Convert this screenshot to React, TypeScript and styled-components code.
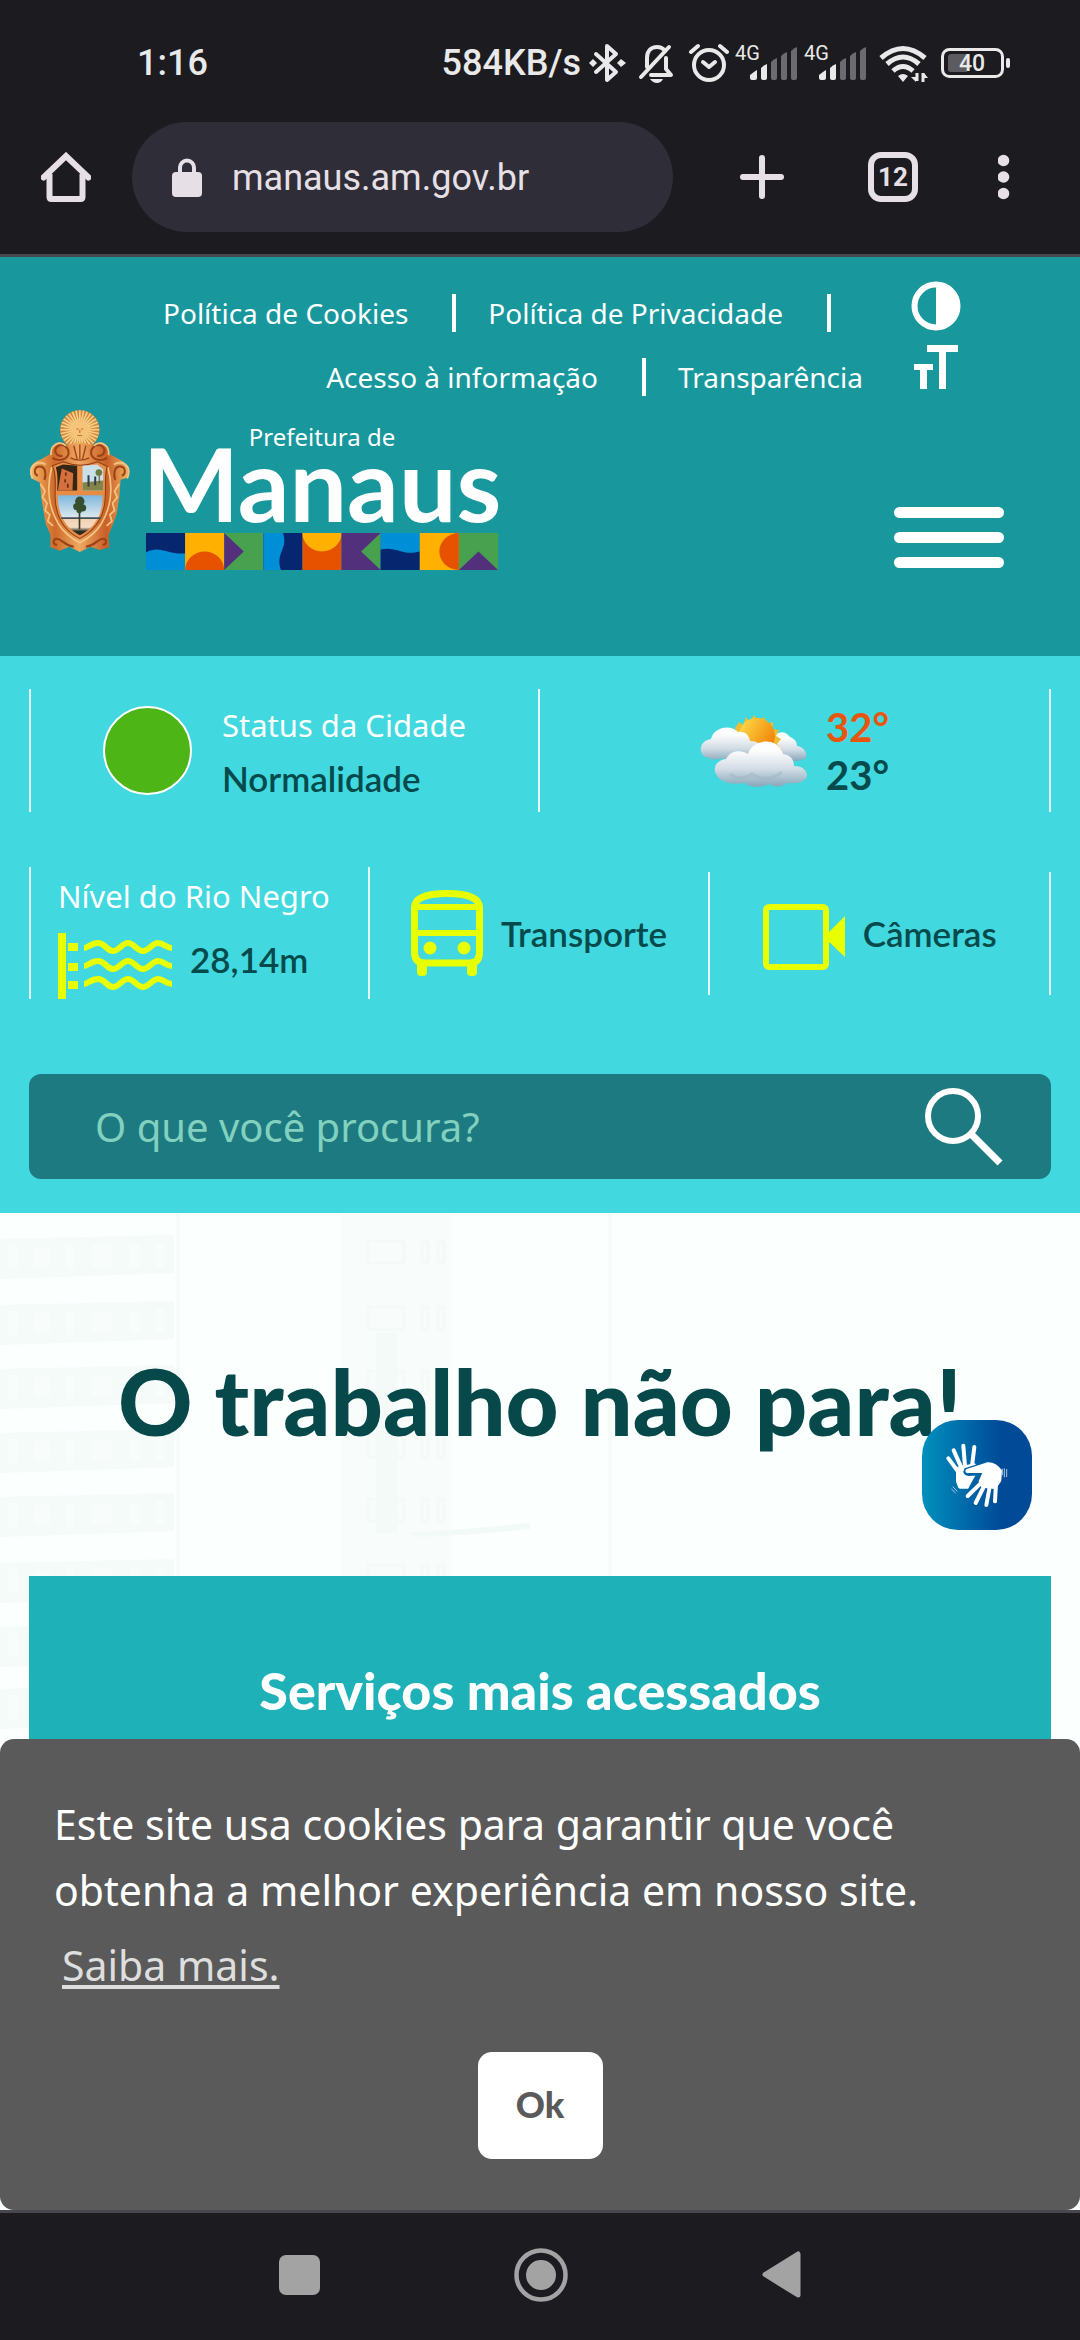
import React from 'react';
import styled, { createGlobalStyle } from 'styled-components';

const GlobalStyle = createGlobalStyle`
  *, *::before, *::after { box-sizing: border-box; }
  html, body { margin: 0; padding: 0; }
  body { background: #1c1b20; font-family: "Noto Sans", "Open Sans", sans-serif; }
  button { border: 0; padding: 0; background: none; color: inherit; font: inherit; cursor: pointer; }
  ul { list-style: none; margin: 0; padding: 0; }
  h1, h2, p { margin: 0; }
  svg { display: block; flex: none; }
`;

const Screen = styled.div`
  display: flex;
  flex-direction: column;
  min-height: 100vh;
`;

/* ---------- device and browser bars ---------- */

const StatusBar = styled.div`
  display: flex;
  align-items: center;
  justify-content: space-between;
  padding: 40px 70px 36px 137px;
  background: #1c1b20;
  color: #e9e9e9;
  font: 500 36px/46px Roboto, sans-serif;
`;

const StatusIcons = styled.div`
  display: flex;
  align-items: center;
  gap: 6px;
`;

const Toolbar = styled.div`
  display: flex;
  align-items: center;
  padding: 0 70px 22px 41px;
  border-bottom: 3px solid #47484d;
  background: #1c1b20;
  color: #e6e0e6;
`;

const AddressPill = styled.label`
  display: flex;
  flex: 1;
  align-items: center;
  gap: 30px;
  min-width: 0;
  height: 110px;
  margin: 0 65px 0 41px;
  padding: 2px 40px 0;
  border-radius: 55px;
  background: #2f2d38;
`;

const AddressInput = styled.input`
  flex: 1;
  min-width: 0;
  padding: 0;
  border: 0;
  outline: 0;
  background: transparent;
  color: #e6e0e6;
  font: 400 36px/48px Roboto, sans-serif;
`;

const ToolbarActions = styled.div`
  display: flex;
  align-items: center;
  gap: 80px;
`;

const BarButton = styled.button`
  display: flex;
  align-items: center;
  justify-content: center;
`;

const TabCount = styled(BarButton)`
  width: 50px;
  height: 50px;
  border: 6px solid #e6e0e6;
  border-radius: 13px;
  font: 700 26px/38px Roboto, sans-serif;
`;

/* ---------- site ---------- */

const Site = styled.div`
  position: relative;
  display: flex;
  flex: 1;
  flex-direction: column;
`;

const Header = styled.header`
  padding: 24px 29px 86px;
  background: #18979d;
  color: #fff;
`;

const TopNav = styled.nav`
  display: flex;
  justify-content: flex-end;
  padding-right: 90px;
`;

const LinkList = styled.ul`
  display: flex;
  flex: 1;
  flex-wrap: wrap;
  justify-content: flex-end;
`;

const LinkItem = styled.li`
  display: flex;
  align-items: center;
  height: 64px;

  &:not(:last-child)::after {
    content: "";
    width: 4px;
    height: 38px;
    margin: 0 32px 0 44px;
    background: #fff;
  }
`;

const TopLink = styled.a`
  color: #fff;
  font-size: 28px;
  line-height: 38px;
  text-decoration: none;
`;

const AccessTools = styled.div`
  display: flex;
  flex-direction: column;
  align-items: center;
  gap: 14px;
  margin-left: 48px;
`;

const Brand = styled.div`
  display: flex;
  align-items: flex-start;
  justify-content: space-between;
`;

const BrandLink = styled.a`
  display: flex;
  gap: 16px;
  color: #fff;
  text-decoration: none;
`;

const Wordmark = styled.span`
  display: flex;
  flex-direction: column;
  align-items: center;
  width: 352px;
  padding-top: 12px;
`;

const WordmarkTop = styled.span`
  font-size: 24px;
  line-height: 32px;
`;

const WordmarkName = styled.span`
  margin-bottom: 20px;
  font-family: Lato, sans-serif;
  font-size: 102px;
  font-weight: 700;
  line-height: 60px;
`;

const MenuButton = styled.button`
  display: flex;
  flex-direction: column;
  gap: 14px;
  width: 110px;
  margin: 98px 47px 0 0;
`;

const MenuLine = styled.span`
  height: 11px;
  border-radius: 6px;
  background: #fff;
`;

const InfoBand = styled.section`
  padding: 33px 29px 34px;
  background: #41d8df;
`;

const InfoRow = styled.div<{ $columns: number }>`
  display: grid;
  grid-template-columns: repeat(${(p) => p.$columns}, 1fr);
  align-items: center;
  margin-bottom: ${(p) => (p.$columns === 2 ? '55px' : '75px')};
`;

const InfoCell = styled.div`
  display: flex;
  align-items: center;
  justify-content: center;
  gap: 18px;
  height: 123px;
  border-right: 2px solid #e6fafb;

  &:first-child { border-left: 2px solid #e6fafb; }
`;

const StatusCell = styled(InfoCell)`
  gap: 30px;
`;

const RiverCell = styled(InfoCell)`
  flex-direction: column;
  align-items: flex-start;
  justify-content: space-between;
  gap: 0;
  height: 132px;
  padding: 2px 0 0 27px;
`;

const RiverReading = styled.div`
  display: flex;
  align-items: flex-start;
  gap: 18px;
`;

const StatusDot = styled.span`
  width: 89px;
  height: 89px;
  border: 2px solid #fff;
  border-radius: 50%;
  background: #4db515;
`;

const Caption = styled.span`
  display: block;
  color: #fff;
  font-size: 31px;
  line-height: 54px;
  white-space: nowrap;
`;

const Strong = styled.span`
  display: block;
  color: #054a4c;
  font-family: Lato, sans-serif;
  font-size: 35px;
  font-weight: 600;
  line-height: 52px;
`;

const InfoLink = styled.a`
  display: flex;
  align-items: center;
  gap: 18px;
  text-decoration: none;
`;

const Temperature = styled.span<{ $hot?: boolean }>`
  display: block;
  color: ${(p) => (p.$hot ? '#e8560c' : '#054a4c')};
  font-family: Lato, sans-serif;
  font-size: 40px;
  font-weight: 700;
  line-height: 48px;
`;

const SearchForm = styled.form`
  display: flex;
  align-items: center;
  height: 105px;
  padding: 0 48px 0 66px;
  border-radius: 12px;
  background: #1d7a80;
`;

const SearchInput = styled.input`
  flex: 1;
  min-width: 0;
  padding: 0;
  border: 0;
  outline: 0;
  background: transparent;
  color: #fff;
  font: 400 40px/56px "Noto Sans", sans-serif;

  &::placeholder { color: #82d1bf; opacity: 1; }
`;

const Content = styled.main`
  position: relative;
  display: flex;
  flex: 1;
  flex-direction: column;
  padding: 136px 29px 0;
  overflow: hidden;
  background: #fbfffe;
`;

const Backdrop = styled.div`
  position: absolute;
  inset: 0;
  opacity: 0.7;
`;

const Headline = styled.h1`
  position: relative;
  margin-bottom: 123px;
  color: #07494b;
  font-family: Lato, sans-serif;
  font-size: 92px;
  font-weight: 900;
  line-height: 104px;
  text-align: center;
`;

const ServicesCard = styled.section`
  position: relative;
  flex: 1;
  padding-top: 84px;
  background: #1eb1b8;
`;

const ServicesTitle = styled.h2`
  color: #fff;
  font-family: Lato, sans-serif;
  font-size: 52px;
  font-weight: 900;
  line-height: 60px;
  text-align: center;
`;

const SignButton = styled.button`
  position: absolute;
  right: 48px;
  top: 207px;
  width: 110px;
  height: 110px;
  border-radius: 36px;
  background: linear-gradient(90deg, #0090bd 0%, #004a98 72%);
`;

const CookieBanner = styled.aside`
  position: absolute;
  right: 0;
  bottom: 0;
  left: 0;
  display: flex;
  flex-direction: column;
  padding: 52px 54px 51px;
  border-radius: 14px;
  background: #5a5a5a;
  color: #fff;
  font-size: 41px;
  line-height: 66px;
`;

const CookieLink = styled.a`
  align-self: flex-start;
  margin: 9px 0 54px 8px;
  color: #dedede;
  text-decoration: underline;
  text-decoration-thickness: 4px;
  text-decoration-skip-ink: none;
  text-underline-offset: 4px;
`;

const OkButton = styled.button`
  align-self: center;
  width: 125px;
  height: 107px;
  padding-bottom: 4px;
  border-radius: 14px;
  background: #fff;
  color: #5a5a5a;
  font-family: Lato, sans-serif;
  font-size: 36px;
  font-weight: 900;
`;

const NavBar = styled.nav`
  display: flex;
  align-items: center;
  justify-content: center;
  gap: 194px;
  height: 130px;
  padding-bottom: 4px;
  border-top: 3px solid #48464f;
  background: #1c1b20;
`;

/* ---------- drawings ---------- */

const SignalIcon = () => (
  <svg width="63" height="46" viewBox="0 -4 63 46" fill="#e9e9e9" aria-label="4G">
    <text x="0" y="16" fontFamily="Roboto, sans-serif" fontSize="20" fontWeight="400">4G</text>
    <path d="M15 34v-3q5-4 7-5v8q0 2-2 2h-3q-2 0-2-2z" />
    <path d="M26 34V24q3-3 6-4v14q0 2-2 2h-2q-2 0-2-2z" />
    <g fill="#6c6c70">
      <path d="M36 34V18q3-3 6-4v20q0 2-2 2h-2q-2 0-2-2z" />
      <path d="M46 34V12q3-3 6-4v26q0 2-2 2h-2q-2 0-2-2z" />
      <path d="M56 34V7q3-3 6-4v31q0 2-2 2h-2q-2 0-2-2z" />
    </g>
  </svg>
);

const BluetoothIcon = () => (
  <svg width="42" height="42" viewBox="0 0 42 42" fill="none" stroke="#e9e9e9" strokeWidth="4" aria-hidden="true">
    <path d="M9 12l20 18-9 8V4l9 8L9 30" strokeLinejoin="round" strokeLinecap="round" />
    <g fill="#e9e9e9" stroke="none"><path d="M2 21l4-4 4 4-4 4zM30 21l4-4 5 4-5 4z" /></g>
  </svg>
);

const MutedIcon = () => (
  <svg width="40" height="42" viewBox="0 0 40 42" fill="none" stroke="#e9e9e9" strokeWidth="4" strokeLinecap="round" aria-hidden="true">
    <path d="M12 25V16c0-7 4-11 10-11 3 0 6 1 8 4M31 16v11l5 6H16" strokeLinejoin="round" />
    <path d="M34 5L6 35" />
    <path d="M15 37h13q-2 4-6 4t-7-4z" fill="#e9e9e9" stroke="none" />
  </svg>
);

const AlarmIcon = () => (
  <svg width="48" height="42" viewBox="0 0 48 42" fill="none" stroke="#e9e9e9" strokeWidth="4" strokeLinecap="round" aria-hidden="true">
    <circle cx="28" cy="23" r="15" />
    <path d="M22 20l6 5 6-5" strokeLinejoin="round" />
    <path d="M10 10l7-6M46 10l-7-6" />
  </svg>
);

const WifiIcon = () => (
  <svg width="62" height="42" viewBox="0 0 62 42" fill="none" stroke="#e9e9e9" strokeWidth="5" aria-hidden="true">
    <path d="M8 16q22-19 44 0M14 22q16-14 32 0M20 29q10-9 20 0" />
    <path d="M25 34q5-4 10 0l-5 6z" fill="#e9e9e9" stroke="none" />
    <path d="M44 31v8M50 31v9" strokeWidth="3" />
    <path d="M38 35h5v5zM51 31l4 5h-4z" fill="#e9e9e9" stroke="none" />
  </svg>
);

const BatteryIcon = () => (
  <svg width="69" height="32" viewBox="0 0 69 32" aria-label="Bateria 40">
    <rect x="1.5" y="2.5" width="60" height="27" rx="7" fill="none" stroke="#e9e9e9" strokeWidth="3" />
    <path d="M10 7h16v18H10q-3 0-3-3V10q0-3 3-3z" fill="#5c5c60" />
    <rect x="65" y="11" width="4" height="10" rx="2" fill="#e9e9e9" />
    <text x="31" y="24" textAnchor="middle" fill="#e9e9e9" fontFamily="Roboto, sans-serif" fontSize="23" fontWeight="500">40</text>
  </svg>
);

const HomeIcon = () => (
  <svg width="50" height="50" viewBox="0 0 50 50" fill="none" stroke="#e6e0e6" strokeWidth="6" aria-hidden="true">
    <path d="M2.500 25.500L25 4l22.500 21.500" strokeLinecap="round" strokeLinejoin="miter" />
    <path d="M8.500 22v23q0 2 2 2h29q2 0 2-2V22" />
  </svg>
);

const LockIcon = () => (
  <svg width="30" height="40" viewBox="0 0 30 40" aria-hidden="true">
    <rect y="14" width="30" height="25" rx="4" fill="#e6e0e6" />
    <path d="M8 16V9.500a7 7 0 0 1 14 0V16" fill="none" stroke="#e6e0e6" strokeWidth="4" />
  </svg>
);

const PlusIcon = () => (
  <svg width="50" height="50" viewBox="0 0 50 50" stroke="#e6e0e6" strokeWidth="6" strokeLinecap="round" aria-hidden="true">
    <path d="M24 6v38M5 25h38" />
  </svg>
);

const DotsIcon = () => (
  <svg width="12" height="50" viewBox="0 0 12 50" fill="#e6e0e6" aria-hidden="true">
    <circle cx="5.500" cy="8.500" r="5.800" /><circle cx="5.500" cy="25" r="5.800" /><circle cx="5.500" cy="41.500" r="5.800" />
  </svg>
);

const ContrastIcon = () => (
  <svg width="50" height="50" viewBox="0 0 50 50" aria-hidden="true">
    <circle cx="25" cy="25" r="21.500" fill="none" stroke="#fff" strokeWidth="6" />
    <path d="M25 5a20 20 0 0 1 0 40z" fill="#fff" />
  </svg>
);

const TextSizeIcon = () => (
  <svg width="44" height="44" viewBox="0 0 44 44" fill="#fff" aria-hidden="true">
    <path d="M13 0h31v7H32v37h-7V7H13zM0 19h19v6h-6v19H6V25H0z" />
  </svg>
);

const RAYS = Array.from({ length: 32 }, (_, i) => (i * Math.PI * 2) / 32);

const CoatOfArms = () => (
  <svg width="101" height="143" viewBox="28 26 302 428" aria-label="Brasão de Manaus">
    <defs>
      <linearGradient id="gold" x1="0" x2="1" y1="0" y2="0">
        <stop offset="0" stopColor="#f3b765" /><stop offset="0.25" stopColor="#cf6a2a" />
        <stop offset="0.5" stopColor="#efa862" /><stop offset="0.78" stopColor="#c85f26" /><stop offset="1" stopColor="#f0b165" />
      </linearGradient>
      <linearGradient id="sky" x1="0" x2="0" y1="0" y2="1">
        <stop offset="0" stopColor="#7fb6dc" /><stop offset="0.55" stopColor="#dbe8ee" />
        <stop offset="0.57" stopColor="#f3cfae" /><stop offset="0.8" stopColor="#f5dcc6" /><stop offset="0.9" stopColor="#2c2b20" />
      </linearGradient>
    </defs>
    <circle cx="180" cy="88" r="59" fill="#d5853c" />
    <g stroke="#f6cf86" strokeWidth="5">
      {RAYS.map((a) => (
        <line key={a} x1={180 + Math.cos(a) * 24} y1={88 + Math.sin(a) * 24} x2={180 + Math.cos(a) * 58} y2={88 + Math.sin(a) * 58} />
      ))}
    </g>
    <circle cx="180" cy="90" r="27" fill="#f6c479" />
    <path d="M170 86h6M184 86h6M180 88v10M173 104q7 4 14 0" stroke="#b4662b" strokeWidth="3" fill="none" />
    <path d="M92 160C92 128 122 118 142 134L180 126L218 134C240 118 268 128 268 160L300 178C322 186 330 210 322 232L302 238L298 290L290 340L276 380L266 402L268 440L240 448L212 438L180 454L148 438L120 450L92 440L92 402L78 370L66 300L60 246L36 234C24 206 36 186 62 178Z" fill="url(#gold)" />
    <g fill="none" stroke="#9b4217" strokeWidth="6">
      <path d="M128 166c-20 4-30-20-12-30 20-8 36 12 28 30-8 14-30 16-46 6" />
      <path d="M232 166c20 4 30-20 12-30-20-8-36 12-28 30 8 14 30 16 46 6" />
      <path d="M54 226c-14-8-10-28 6-28 18 0 20 24 14 40" />
      <path d="M306 226c14-8 10-28-6-28-18 0-20 24-14 40" />
      <path d="M112 432c-14 2-14-18 0-18 16 2 20 20 50 24" />
      <path d="M248 432c14 2 14-18 0-18-16 2-20 20-50 24" />
      <path d="M162 136l10 40M180 132v44M198 136l-10 40M152 172q28 14 56 0" strokeWidth="4" />
    </g>
    <g fill="none" stroke="#f7c583" strokeWidth="5">
      <path d="M38 234c-16-40 16-56 40-42M322 234c16-40-16-56-40-42" />
      <path d="M94 164c-4-30 24-46 44-28M266 164c4-30-24-46-44-28" />
      <path d="M62 250l14 22-8 18 14 18-6 22 14 12-6 20 16 14M298 250l-14 22 8 18-14 18 6 22-14 12 6 20-16 14" />
      <path d="M96 200c-16 60-10 120 20 170 18 28 40 44 64 56 24-12 46-28 64-56 30-50 36-110 20-170" />
    </g>
    <path d="M98 196L130 184Q180 204 234 184L262 198C254 220 258 256 256 290C254 356 220 392 180 414C136 392 108 350 106 290C106 250 110 220 98 196Z" fill="#e88c45" stroke="#8b3d18" strokeWidth="3" />
    <path d="M108 200L130 192L172 196V270H112C114 240 114 220 108 200Z" fill="#332616" />
    <path d="M126 204L160 218L158 270H114Q120 236 126 204Z" fill="#d4703c" />
    <path d="M138 216v10M136 236v10M144 250v12" stroke="#6b2c14" strokeWidth="5" />
    <path d="M188 196L232 192L250 206V270H188Z" fill="#cbdfe8" />
    <path d="M188 246L250 240V270H188Z" fill="#83834a" />
    <path d="M206 224v34M226 228v26" stroke="#313e50" strokeWidth="6" />
    <path d="M238 214v36" stroke="#5a4a2c" strokeWidth="3" />
    <circle cx="237" cy="216" r="10" fill="#6c7a44" />
    <path d="M114 284H248C250 350 218 384 180 404C142 384 114 350 114 284Z" fill="url(#sky)" />
    <path d="M124 350h118v5H124z" fill="#42525a" />
    <path d="M179 320v66" stroke="#3b3a24" strokeWidth="5" />
    <g fill="#364e2c"><circle cx="180" cy="302" r="14" /><circle cx="171" cy="318" r="11" /><circle cx="188" cy="322" r="11" /><circle cx="178" cy="330" r="8" /></g>
  </svg>
);

const TileStrip = () => (
  <svg width="352" height="37" viewBox="0 0 360 38" preserveAspectRatio="none" aria-hidden="true">
    <path d="M0 0h40v38H0z" fill="#072670" /><path d="M0 20C14 12 20 22 40 21V38H0z" fill="#008fd6" />
    <path d="M40 0h40v38H40z" fill="#ffb000" /><path d="M40 38a20 19 0 0 1 40 0z" fill="#e65200" />
    <path d="M80 0h40v38H80z" fill="#48a14f" /><path d="M80 0l20 19-20 19z" fill="#52307c" />
    <path d="M120 0h40v38h-40z" fill="#072670" /><path d="M120 0h20c6 16-8 20-2 38h-18z" fill="#008fd6" />
    <path d="M160 0h40v38h-40z" fill="#e65200" /><path d="M160 0a20 19 0 0 0 40 0z" fill="#ffb000" />
    <path d="M200 0h40v38h-40z" fill="#52307c" /><path d="M240 0l-20 19 20 19z" fill="#48a14f" />
    <path d="M240 0h40v38h-40z" fill="#008fd6" /><path d="M240 17c16-4 22 7 40 2v19h-40z" fill="#072670" />
    <path d="M280 0h40v38h-40z" fill="#ffb000" /><path d="M320 0a20 19 0 0 0 0 38z" fill="#e65200" />
    <path d="M320 0h40v38h-40z" fill="#48a14f" /><path d="M320 38l20-19 20 19z" fill="#52307c" />
  </svg>
);

const WeatherIcon = () => (
  <svg width="108" height="74" viewBox="0 0 108 74" aria-label="Parcialmente nublado">
    <defs>
      <linearGradient id="cloud" x1="0" x2="0" y1="0" y2="1">
        <stop offset="0.2" stopColor="#fdfdfd" /><stop offset="0.6" stopColor="#d3dde6" /><stop offset="1" stopColor="#86a6ba" />
      </linearGradient>
      <linearGradient id="sun" x1="0" x2="1" y1="0" y2="0.6">
        <stop offset="0" stopColor="#ffe14d" /><stop offset="1" stopColor="#f08508" />
      </linearGradient>
    </defs>
    <path d="M70 32c2-14 14-18 20-9 5 2 7 5 7 9 7 1 10 6 9 12-6 4-14 3-22 3z" fill="url(#cloud)" />
    <path d="M35 14l4-6 4 3 3-8 4 5 4-7 4 6 6-4 2 7 7-2 0 7 6 1-3 6 5 3-4 5 5 6-3 3-38-8z" fill="#eebd36" />
    <circle cx="57" cy="22" r="18" fill="url(#sun)" />
    <path d="M2 40C-2 32 4 26 11 25 14 13 30 10 38 18c8-1 11 4 12 9 8 0 12 4 11 11-4 8-16 6-22 6-6 6-14 4-17 0-8 3-16 1-20-4z" fill="url(#cloud)" />
    <path d="M16 60c-4-8 2-14 10-15 4-8 14-10 22-5 4-15 30-18 35 0 8 1 11 6 11 12 8 0 13 4 13 10-2 7-12 8-20 7-6 5-14 4-18 1-6 4-20 4-24-1-12 2-25 0-29-9z" fill="url(#cloud)" />
    <path d="M30 60q10 8 22 0 14 10 30-2" fill="none" stroke="#9db6c6" strokeWidth="3" opacity="0.5" />
  </svg>
);

const WAVE = 'c4 0 7-5 14-5s9 8 15 8 9-8 15-8 9 8 15 8 9-8 15-8 8 5 14 5';

const RiverIcon = () => (
  <svg width="114" height="66" viewBox="0 0 114 66" fill="#e7ff00" aria-hidden="true">
    <path d="M0 0h8v66H0zM10 10h10v8H10zM10 30h10v8H10zM10 48h10v8H10z" />
    <g fill="none" stroke="#e7ff00" strokeWidth="6">
      <path d={`M26 15${WAVE}`} /><path d={`M26 33${WAVE}`} /><path d={`M26 51${WAVE}`} />
    </g>
  </svg>
);

const BusIcon = () => (
  <svg width="72" height="86" viewBox="0 0 72 86" fill="none" stroke="#e7ff00" strokeWidth="7" aria-hidden="true">
    <path d="M3.500 17C4 8 16 3.500 36 3.500S68 8 68.500 17V62q0 11-10 11H14Q3.500 73 3.500 62z" />
    <path d="M4 17h64M4 43h64" strokeWidth="6" />
    <g fill="#e7ff00" stroke="none">
      <circle cx="19" cy="58" r="6.500" /><circle cx="53" cy="58" r="6.500" />
      <path d="M6 70h10v12q0 4-4 4h-2q-4 0-4-4zM56 70h10v12q0 4-4 4h-2q-4 0-4-4z" />
    </g>
  </svg>
);

const CameraIcon = () => (
  <svg width="82" height="74" viewBox="0 -8 82 74" aria-hidden="true">
    <rect x="3" y="3" width="60" height="60" rx="3" fill="none" stroke="#e7ff00" strokeWidth="6" />
    <path d="M64 30l18-18v41L64 36z" fill="#e7ff00" />
  </svg>
);

const SearchIcon = () => (
  <svg width="78" height="78" viewBox="0 0 78 78" fill="none" stroke="#fff" strokeWidth="6" aria-hidden="true">
    <circle cx="28" cy="28" r="25" /><path d="M46 46l29 29" strokeWidth="7" />
  </svg>
);

const SignHands = () => (
  <svg width="110" height="110" viewBox="0 0 330 330" aria-hidden="true">
    <g fill="#fff" stroke="#fff" strokeLinecap="round" strokeWidth="12">
      <path d="M79 115l28 38M95 91l24 54M124 77l5 62M157 81l-7 58" />
      <path d="M108 146l48-10q-22 10-20 18l20 10q8 8-6 22l-10 14h-26l-6-16z" strokeLinejoin="round" />
    </g>
    <path d="M200 128l-68 22q-6 10 8 12l32-2-14 22-24 46" fill="none" stroke="#0063a5" strokeWidth="12" />
    <g fill="#fff" stroke="#fff" strokeLinecap="round" strokeLinejoin="round" strokeWidth="12">
      <path d="M136 153l60-20q22-2 38 20l-2 28-14 20-36-4-6-12 14-32z" />
      <path d="M176 190l-39 38M188 195l-27 54M204 195l-11 60M222 190l-3 54" />
    </g>
    <path d="M241 146v20M247 145v27M254 147v24M92 200l14 14M88 207l13 12" stroke="#a9c9e4" strokeWidth="3" />
  </svg>
);

const FLOORS = [40, 106, 170, 234, 298, 364, 428, 490];

const FacadeDrawing = () => (
  <svg width="1080" height="560" viewBox="0 0 1080 560" aria-hidden="true">
    <path d="M178 0v560M610 0v370" stroke="#f3faf8" strokeWidth="4" />
    <path d="M342 0h110v370H342z" fill="#f8fcfb" />
    {FLOORS.map((y) => (
      <g key={y}>
        <path d={`M0 ${y - 14}L174 ${y - 18}V${y + 20}L0 ${y + 26}z`} fill="#f3faf8" />
        <path d={`M8 ${y - 8}h10v24H8zM34 ${y - 6}h16v20H34zM66 ${y - 8}h8v24h-8zM92 ${y - 8}h20v22H92zM130 ${y - 8}h10v22h-10zM156 ${y - 10}h8v24h-8z`} fill="#f8fdfc" />
      </g>
    ))}
    {FLOORS.slice(0, 6).map((y) => (
      <path key={y} d={`M368 ${y - 12}h36v22h-36zM422 ${y - 12}h6v22h-6zM438 ${y - 12}h6v22h-6z`} fill="none" stroke="#f2f8f6" strokeWidth="3" />
    ))}
    <path d="M376 120h22v200h-22z" fill="#f1f9f6" />
    <path d="M410 320q60-4 120-10v6q-60 6-110 8z" fill="#eff8f5" />
  </svg>
);

/* ---------- page ---------- */

const topLinks = ['Política de Cookies', 'Política de Privacidade', 'Acesso à informação', 'Transparência'];

export default function App() {
  return (
    <Screen>
      <GlobalStyle />
      <StatusBar>
        <span>1:16</span>
        <StatusIcons>
          <span>584KB/s</span>
          <BluetoothIcon />
          <MutedIcon />
          <AlarmIcon />
          <SignalIcon />
          <SignalIcon />
          <WifiIcon />
          <BatteryIcon />
        </StatusIcons>
      </StatusBar>

      <Toolbar>
        <BarButton aria-label="Página inicial"><HomeIcon /></BarButton>
        <AddressPill>
          <LockIcon />
          <AddressInput aria-label="Endereço" defaultValue="manaus.am.gov.br" />
        </AddressPill>
        <ToolbarActions>
          <BarButton aria-label="Nova guia"><PlusIcon /></BarButton>
          <TabCount>12</TabCount>
          <BarButton aria-label="Mais opções"><DotsIcon /></BarButton>
        </ToolbarActions>
      </Toolbar>

      <Site>
        <Header>
          <TopNav>
            <LinkList>
              {topLinks.map((label) => (
                <LinkItem key={label}><TopLink href="#">{label}</TopLink></LinkItem>
              ))}
            </LinkList>
            <AccessTools>
              <button aria-label="Contraste"><ContrastIcon /></button>
              <button aria-label="Tamanho do texto"><TextSizeIcon /></button>
            </AccessTools>
          </TopNav>
          <Brand>
            <BrandLink href="#">
              <CoatOfArms />
              <Wordmark>
                <WordmarkTop>Prefeitura de</WordmarkTop>
                <WordmarkName>Manaus</WordmarkName>
                <TileStrip />
              </Wordmark>
            </BrandLink>
            <MenuButton aria-label="Menu"><MenuLine /><MenuLine /><MenuLine /></MenuButton>
          </Brand>
        </Header>

        <InfoBand>
          <InfoRow $columns={2}>
            <StatusCell>
              <StatusDot />
              <div>
                <Caption>Status da Cidade</Caption>
                <Strong>Normalidade</Strong>
              </div>
            </StatusCell>
            <InfoCell>
              <WeatherIcon />
              <div>
                <Temperature $hot>32°</Temperature>
                <Temperature>23°</Temperature>
              </div>
            </InfoCell>
          </InfoRow>
          <InfoRow $columns={3}>
            <RiverCell>
              <Caption>Nível do Rio Negro</Caption>
              <RiverReading>
                <RiverIcon />
                <Strong>28,14m</Strong>
              </RiverReading>
            </RiverCell>
            <InfoCell>
              <InfoLink href="#"><BusIcon /><Strong>Transporte</Strong></InfoLink>
            </InfoCell>
            <InfoCell>
              <InfoLink href="#"><CameraIcon /><Strong>Câmeras</Strong></InfoLink>
            </InfoCell>
          </InfoRow>
          <SearchForm onSubmit={(e) => e.preventDefault()}>
            <SearchInput aria-label="Buscar" placeholder="O que você procura?" />
            <button aria-label="Pesquisar"><SearchIcon /></button>
          </SearchForm>
        </InfoBand>

        <Content>
          <Backdrop><FacadeDrawing /></Backdrop>
          <Headline>O trabalho não para!</Headline>
          <ServicesCard>
            <ServicesTitle>Serviços mais acessados</ServicesTitle>
          </ServicesCard>
          <SignButton aria-label="Tradução em Libras"><SignHands /></SignButton>
        </Content>

        <CookieBanner>
          <p>Este site usa cookies para garantir que você obtenha a melhor experiência em nosso site.</p>
          <CookieLink href="#">Saiba mais.</CookieLink>
          <OkButton>Ok</OkButton>
        </CookieBanner>
      </Site>

      <NavBar>
        <BarButton aria-label="Recentes">
          <svg width="41" height="40" viewBox="0 0 41 40"><rect width="41" height="40" rx="7" fill="#a3a3a3" /></svg>
        </BarButton>
        <BarButton aria-label="Início">
          <svg width="54" height="54" viewBox="0 0 54 54">
            <circle cx="27" cy="27" r="24.500" fill="none" stroke="#a3a3a3" strokeWidth="4.500" />
            <circle cx="27" cy="27" r="15" fill="#a3a3a3" />
          </svg>
        </BarButton>
        <BarButton aria-label="Voltar">
          <svg width="40" height="47" viewBox="0 0 40 47">
            <path d="M36 3v41L3 23.500z" fill="#a3a3a3" stroke="#a3a3a3" strokeWidth="5" strokeLinejoin="round" />
          </svg>
        </BarButton>
      </NavBar>
    </Screen>
  );
}
